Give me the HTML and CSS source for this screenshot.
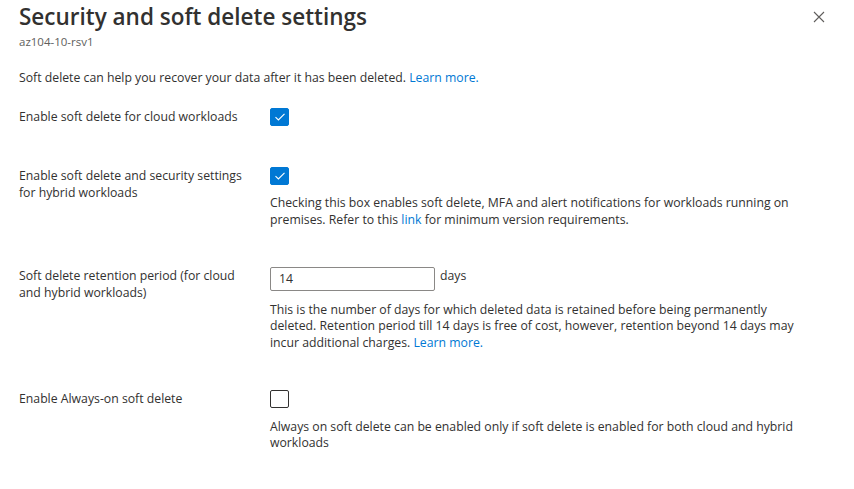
FILE: index.html
```html
<!DOCTYPE html>
<html lang="en">
<head>
<meta charset="utf-8">
<title>Security and soft delete settings</title>
<link rel="stylesheet" href="styles.css">
</head>
<body>
<div class="panel">
  <header class="header">
    <div class="titles">
      <h1 class="title">Security and soft delete settings</h1>
      <div class="subtitle">az104-10-rsv1</div>
    </div>
    <button class="close" aria-label="Close">
      <svg width="12" height="12" viewBox="0 0 12 12"><path d="M1 1L11 11M11 1L1 11" stroke="#605e5c" stroke-width="1.1" fill="none"/></svg>
    </button>
  </header>

  <p class="intro">Soft delete can help you recover your data after it has been deleted. <a href="#" class="link">Learn more.</a></p>

  <div class="row row-first">
    <div class="label">Enable soft delete for cloud workloads</div>
    <div class="control">
      <span class="checkbox checked"><svg width="12" height="10" viewBox="0 0 12 10"><path d="M1.5 5.2L4.4 8L10.5 1.8" stroke="#fff" stroke-width="1.1" fill="none"/></svg></span>
    </div>
  </div>

  <div class="row row-second">
    <div class="label">Enable soft delete and security settings for hybrid workloads</div>
    <div class="control">
      <span class="checkbox checked"><svg width="12" height="10" viewBox="0 0 12 10"><path d="M1.5 5.2L4.4 8L10.5 1.8" stroke="#fff" stroke-width="1.1" fill="none"/></svg></span>
      <p class="desc">Checking this box enables soft delete, MFA and alert notifications for workloads running on<br>premises. Refer to this <a href="#" class="link">link</a> for minimum version requirements.</p>
    </div>
  </div>

  <div class="row">
    <div class="label">Soft delete retention period (for cloud and hybrid workloads)</div>
    <div class="control">
      <div class="input-line">
        <span class="input">14</span>
        <span class="unit">days</span>
      </div>
      <p class="desc">This is the number of days for which deleted data is retained before being permanently<br>deleted. Retention period till 14 days is free of cost, however, retention beyond 14 days may<br>incur additional charges. <a href="#" class="link">Learn more.</a></p>
    </div>
  </div>

  <div class="row">
    <div class="label">Enable Always-on soft delete</div>
    <div class="control">
      <span class="checkbox"></span>
      <p class="desc">Always on soft delete can be enabled only if soft delete is enabled for both cloud and hybrid<br>workloads</p>
    </div>
  </div>
</div>
</body>
</html>
```

FILE: styles.css
```css
* { box-sizing: border-box; }
html, body {
  margin: 0;
  padding: 0;
  background: #ffffff;
}
body {
  font-family: "Open Sans", "Noto Sans", sans-serif;
  font-size: 12.25px;
  line-height: 16.75px;
  color: #323130;
}
.panel {
  padding: 0 0 0 19px;
}
.header {
  display: flex;
  justify-content: space-between;
  align-items: flex-start;
}
.title {
  margin: 0;
  padding-top: 2px;
  font-size: 22.5px;
  line-height: 30px;
  font-weight: 600;
  color: #323130;
}
.subtitle {
  font-size: 11.5px;
  line-height: 15px;
  color: #605e5c;
  margin-top: 2px;
}
.close {
  border: 0;
  background: transparent;
  padding: 0;
  margin: 11px 29px 0 0;
  width: 12px;
  height: 12px;
  display: flex;
}
.intro {
  margin: 21px 0 0 0;
}
.link {
  color: #0078d4;
  text-decoration: none;
}
.row {
  display: grid;
  grid-template-columns: 251px 545px;
  margin-top: 38.5px;
}
.row-first {
  margin-top: 21.25px;
}
.row-second {
  margin-top: 41px;
}
.label {
  padding: 1px 20px 0 0;
}
.control {
  display: flex;
  flex-direction: column;
  align-items: flex-start;
}
.checkbox {
  width: 19px;
  height: 18px;
  border: 1px solid #323130;
  border-radius: 2px;
  display: flex;
  align-items: center;
  justify-content: center;
}
.checkbox.checked {
  background: #0078d4;
  border-color: #0078d4;
}
.desc {
  margin: 10.25px 0 0 0;
}
.input-line {
  display: flex;
  align-items: flex-start;
  gap: 5px;
}
.input {
  width: 165px;
  height: 24px;
  border: 1px solid #8a8886;
  border-radius: 2px;
  padding: 3px 8px;
  line-height: 16.75px;
}
.unit {
  padding-top: 1px;
}
```
